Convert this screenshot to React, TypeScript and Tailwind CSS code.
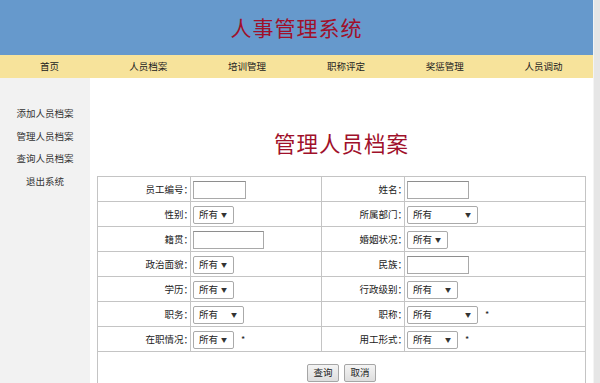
import React from "react";

const navItems = ["首页", "人员档案", "培训管理", "职称评定", "奖惩管理", "人员调动"];
const sideItems = ["添加人员档案", "管理人员档案", "查询人员档案", "退出系统"];

const TextBox = ({ w }: { w: string }) => (
  <span className={`inline-block h-[18px] ${w} border border-[#a9a9a9] border-t-[#8e8e8e] bg-white align-middle`} />
);

const Select = ({ w, star }: { w: string; star?: boolean }) => (
  <span className="inline-flex items-center whitespace-nowrap align-middle">
    <span
      className={`inline-flex h-[18px] shrink-0 ${w} items-center justify-between rounded-[2px] border border-[#aaaaaa] bg-white pl-[5px] pr-[6px] text-[9.5px] leading-none text-[#222]`}
    >
      <span>所有</span>
      <span className="text-[6px] text-[#333]">▼</span>
    </span>
    {star && <span className="ml-[7px] text-[9px] text-[#222]">*</span>}
  </span>
);

const Label = ({ text }: { text: string }) => (
  <td className="border border-[#c4c4c4] pr-0 text-right text-[9.5px] whitespace-nowrap text-[#222]">
    {text}
    <span className="-mr-[3px]">：</span>
  </td>
);

const Field = ({ children }: { children: React.ReactNode }) => (
  <td className="border border-[#c4c4c4] pl-[2px] leading-none">{children}</td>
);

export default function App() {
  return (
    <div className="flex h-[383px] w-[600px] overflow-hidden bg-white font-['Noto_Sans_CJK_SC',sans-serif]">
      <div className="flex w-[593px] flex-col">
        <div className="flex h-[55px] shrink-0 items-center justify-center bg-[#6699cc]">
          <h1 className="text-[21px] leading-none tracking-[1px] text-[#a0102a]">人事管理系统</h1>
        </div>
        <div className="grid h-[23px] shrink-0 grid-cols-6 items-center bg-[#f7e39b] text-[9.5px] text-[#222]">
          {navItems.map((n) => (
            <div key={n} className="text-center">
              {n}
            </div>
          ))}
        </div>
        <div className="flex flex-1">
          <div className="w-[90px] bg-[#f2f2f2] pt-[24px]">
            {sideItems.map((s) => (
              <div key={s} className="text-center text-[9.5px] leading-[22.7px] text-[#333]">
                {s}
              </div>
            ))}
          </div>
          <div className="flex-1 pt-[52px]">
            <h2 className="text-center text-[21.5px] leading-[26px] tracking-[1px] text-[#a0102a]">管理人员档案</h2>
            <table className="mx-auto mt-[20px] w-[488px] table-fixed border-collapse border border-[#c4c4c4]">
              <colgroup>
                <col className="w-[93px]" />
                <col className="w-[131px]" />
                <col className="w-[83px]" />
                <col className="w-[181px]" />
              </colgroup>
              <tbody>
                <tr className="h-[25px]">
                  <Label text="员工编号" />
                  <Field><TextBox w="w-[53px]" /></Field>
                  <Label text="姓名" />
                  <Field><TextBox w="w-[62px]" /></Field>
                </tr>
                <tr className="h-[25px]">
                  <Label text="性别" />
                  <Field><Select w="w-[41px]" /></Field>
                  <Label text="所属部门" />
                  <Field><Select w="w-[71px]" /></Field>
                </tr>
                <tr className="h-[25px]">
                  <Label text="籍贯" />
                  <Field><TextBox w="w-[71px]" /></Field>
                  <Label text="婚姻状况" />
                  <Field><Select w="w-[41px]" /></Field>
                </tr>
                <tr className="h-[25px]">
                  <Label text="政治面貌" />
                  <Field><Select w="w-[41px]" /></Field>
                  <Label text="民族" />
                  <Field><TextBox w="w-[62px]" /></Field>
                </tr>
                <tr className="h-[25px]">
                  <Label text="学历" />
                  <Field><Select w="w-[41px]" /></Field>
                  <Label text="行政级别" />
                  <Field><Select w="w-[51px]" /></Field>
                </tr>
                <tr className="h-[25px]">
                  <Label text="职务" />
                  <Field><Select w="w-[51px]" /></Field>
                  <Label text="职称" />
                  <Field><Select w="w-[71px]" star /></Field>
                </tr>
                <tr className="h-[25px]">
                  <Label text="在职情况" />
                  <Field><Select w="w-[41px]" star /></Field>
                  <Label text="用工形式" />
                  <Field><Select w="w-[51px]" star /></Field>
                </tr>
                <tr className="h-[38px]">
                  <td colSpan={4} className="border border-[#c4c4c4] pb-[2px] text-center">
                    <span className="inline-flex gap-[5px]">
                      <button className="h-[18px] w-[32px] rounded-[2px] border border-[#a6a6a6] bg-gradient-to-b from-[#f4f4f4] to-[#dedede] text-[9.5px] leading-none text-[#222]">
                        查询
                      </button>
                      <button className="h-[18px] w-[32px] rounded-[2px] border border-[#a6a6a6] bg-gradient-to-b from-[#f4f4f4] to-[#dedede] text-[9.5px] leading-none text-[#222]">
                        取消
                      </button>
                    </span>
                  </td>
                </tr>
              </tbody>
            </table>
          </div>
        </div>
      </div>
      <div className="w-[7px] border-l border-[#f4f4f4] bg-[#e6e6e6]" />
    </div>
  );
}
